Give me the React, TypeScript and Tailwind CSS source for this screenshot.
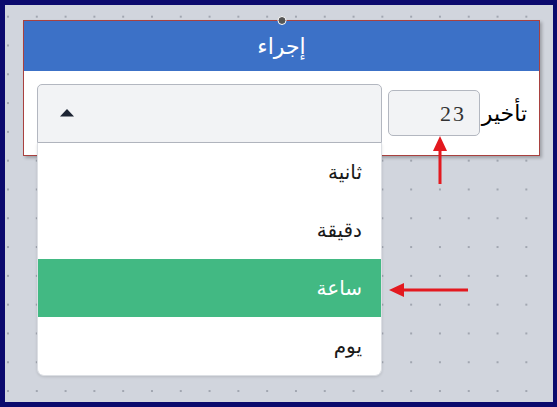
import React from "react";

const units = ["ثانية", "دقيقة", "ساعة", "يوم"];

function ArrowUp() {
  return (
    <svg className="absolute left-[422px] top-[126px]" width="26" height="56" viewBox="0 0 26 56">
      <path d="M13 5 L20 20 L6 20 Z" fill="#e3191f" />
      <rect x="11.5" y="18" width="3" height="35" fill="#e3191f" />
    </svg>
  );
}

function ArrowLeft() {
  return (
    <svg className="absolute left-[379px] top-[272px]" width="90" height="26" viewBox="0 0 90 26">
      <path d="M5 13 L20 6 L20 20 Z" fill="#e3191f" />
      <rect x="18" y="11.5" width="66" height="3" fill="#e3191f" />
    </svg>
  );
}

export default function App() {
  const selected = "ساعة";
  return (
    <div className="relative h-[407px] w-[557px] overflow-hidden border-[5px] border-r-4 border-[#0b0a6d] bg-[#d1d5dd] bg-[radial-gradient(circle_at_1px_1px,#a1a6b0_1px,transparent_1.4px)] bg-[size:28.8px_28.8px] bg-[position:2px_10.7px] font-['Liberation_Serif','DejaVu_Sans',serif]">
      <div className="ml-[18px] mt-[15px] w-[517px] border border-[#a9413f] bg-white shadow-[2px_2px_3px_rgba(0,0,0,0.25)]">
        <div className="relative flex h-[50px] items-center justify-center bg-[#3c71c7] text-[22px] text-white">
          <span className="absolute left-1/2 top-[-5px] h-[9px] w-[9px] -translate-x-1/2 rounded-full border border-white bg-[#555]" />
          <span dir="rtl">إجراء</span>
        </div>
        <div dir="rtl" className="flex h-[84px] items-center gap-[6px] pl-[13px] pr-[12px]">
          <span className="w-[41px] whitespace-nowrap text-[22px] text-black">تأخير</span>
          <div className="flex h-[46px] w-[92px] items-center rounded-[5px] border border-[#b3b7c0] bg-[#f2f3f5] pr-[13px] text-[22px] tracking-[2px] text-[#333]">
            23
          </div>
          <div className="relative flex-1">
            <div dir="ltr" className="flex h-[59px] items-center rounded-t-[5px] border border-[#b3b7c0] bg-[#f2f3f5] pl-[22px]">
              <svg width="14" height="8" viewBox="0 0 14 8">
                <path d="M7 0 L14 7.5 L0 7.5 Z" fill="#1d2433" />
              </svg>
            </div>
            <ul className="absolute left-0 right-0 top-full z-10 overflow-hidden rounded-b-[7px] border border-t-0 border-[#dcdfe4] bg-white shadow-[0_1px_3px_rgba(0,0,0,0.12)]">
              {units.map((u) => (
                <li
                  key={u}
                  className={
                    u === selected
                      ? "flex h-[58px] items-center bg-[#42b983] pr-[19px] text-[20px] text-white"
                      : "flex h-[58px] items-center pr-[19px] text-[20px] text-[#1a1a1a]"
                  }
                >
                  {u}
                </li>
              ))}
            </ul>
          </div>
        </div>
      </div>
      <ArrowUp />
      <ArrowLeft />
    </div>
  );
}
